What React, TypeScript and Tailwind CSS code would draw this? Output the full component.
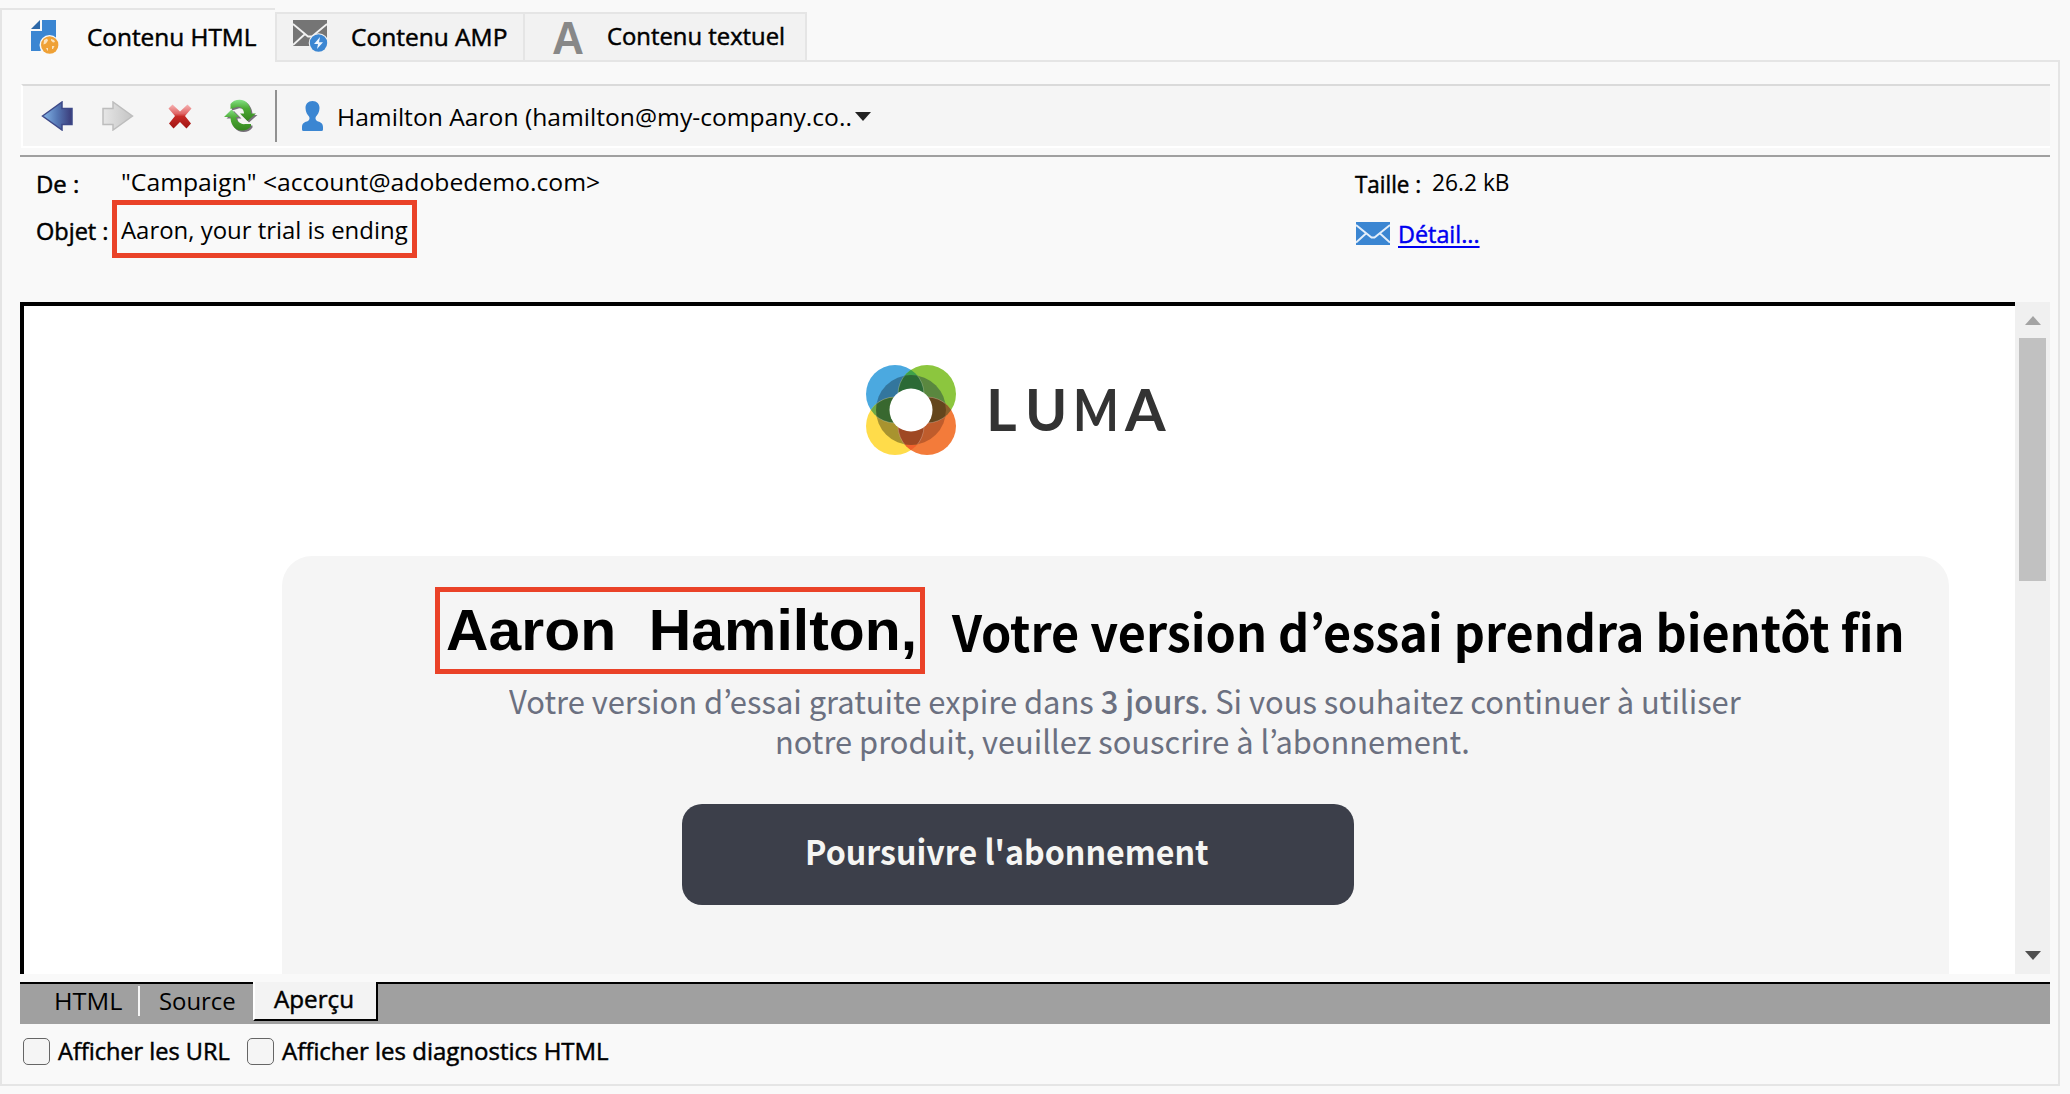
import { useLayoutEffect, useRef, useState, type ReactNode } from "react";

const UI = "font-['Open_Sans','Noto_Sans',sans-serif] text-[24.5px] leading-[32px]";
const CLEAN = "font-['Noto_Sans_CJK_KR','Noto_Sans_CJK_SC',sans-serif]";
const LABEL = "[-webkit-text-stroke:0.5px_currentColor]";

/* A single line of text condensed or stretched to fill a given width. */
function Fit({ w, className = "", children }: { w: number; className?: string; children: ReactNode }) {
  const ref = useRef<HTMLSpanElement>(null);
  const [scale, setScale] = useState(1);
  useLayoutEffect(() => {
    if (ref.current) setScale(w / ref.current.offsetWidth);
  }, [w]);
  return (
    <span className={`block shrink-0 ${className}`} style={{ width: w }}>
      <span ref={ref} className="inline-block origin-left whitespace-pre align-top" style={{ transform: `scaleX(${scale})` }}>
        {children}
      </span>
    </span>
  );
}

function PageIcon() {
  return (
    <svg width="28" height="34" viewBox="0 0 28 34" className="shrink-0">
      <path d="M11 0H25V20L9 31H0V11H11Z" fill="#3b86d2" />
      <path d="M0 9L9 0V9Z" fill="#2d68a8" />
      <circle cx="18.5" cy="25" r="10" fill="#f9f9f9" />
      <circle cx="18.7" cy="25" r="8.7" fill="#efa136" />
      <path d="M13 20l3-1.500 1 2-2 3-2.500 1zM20 19l3 1 1 2-2 .5-2-2zM15 28l2 0 0 3-1-1zM21 26l2.500 0-1.500 3-1 0z" fill="#fbe3bd" />
    </svg>
  );
}

function MailBoltIcon() {
  return (
    <svg width="35" height="33" viewBox="0 0 35 33" className="shrink-0">
      <path d="M0 0H34V26H0Z" fill="#757575" />
      <path d="M0 4L15 16.500H19L34 4M0 25L12 14M34 25L22 14" fill="none" stroke="#f2f2f2" strokeWidth="1.800" />
      <circle cx="25.500" cy="23" r="9.800" fill="#f2f2f2" />
      <circle cx="25.500" cy="23" r="8.700" fill="#3b86d2" />
      <path d="M27 17L21 24H25L24 29L30 22.300H26Z" fill="#eef6ff" />
    </svg>
  );
}

function BackIcon() {
  return (
    <svg width="32" height="30" viewBox="0 0 32 30" className="shrink-0">
      <defs>
        <linearGradient id="back" x1="0" x2="1">
          <stop offset="0" stopColor="#86b8ea" />
          <stop offset=".5" stopColor="#5577b4" />
          <stop offset="1" stopColor="#3a3a78" />
        </linearGradient>
      </defs>
      <path d="M1.500 15L21 1V7.500H31V23.500H21V29Z" fill="url(#back)" stroke="#3d4988" strokeWidth="1.500" />
    </svg>
  );
}

function ForwardIcon() {
  return (
    <svg width="32" height="30" viewBox="0 0 32 30" className="shrink-0">
      <defs>
        <linearGradient id="fwd" x1="0" x2="1">
          <stop offset="0" stopColor="#e6e6e6" />
          <stop offset="1" stopColor="#c4c4c4" />
        </linearGradient>
      </defs>
      <path d="M30.500 15L11 1V7.500H1V23.500H11V29Z" fill="url(#fwd)" stroke="#bdbdbd" strokeWidth="1.500" />
    </svg>
  );
}

function DeleteIcon() {
  return (
    <svg width="24" height="25" viewBox="0 0 24 25" className="shrink-0">
      <defs>
        <linearGradient id="del" x1="0" x2="0" y1="0" y2="1">
          <stop offset="0" stopColor="#f7b4b4" />
          <stop offset=".38" stopColor="#e06565" />
          <stop offset=".5" stopColor="#c62a26" />
          <stop offset="1" stopColor="#a01412" />
        </linearGradient>
      </defs>
      <path d="M4.500 0.500L12 7.500L19.500 0.500L23.500 4.500L17 12L23 19.500L18.500 24.500L12 18L5.500 24.500L1 19.500L7 12L0.500 4.500Z" fill="url(#del)" />
    </svg>
  );
}

function RefreshIcon() {
  return (
    <svg width="34" height="34" viewBox="0 0 34 34" className="shrink-0">
      <defs>
        <linearGradient id="ref" x1="0" x2="0" y1="0" y2="1">
          <stop offset="0" stopColor="#84e084" />
          <stop offset=".4" stopColor="#4cab35" />
          <stop offset="1" stopColor="#35851f" />
        </linearGradient>
      </defs>
      <g fill="#77707a" transform="translate(1.500 1.500)">
        <path d="M6.500 5C10 0 20-1 24 5C26 8 27 11 27 14.500H32L23.500 22L16 14.500H20C20 10 16 6 11.500 8.500L6.500 10Z" />
        <path d="M27 27C23 33 13 33 9 27C7 24 6.500 21 6.500 18H1L8.500 10.500L16 18H12C12 22 17 26 21.500 25H27Z" />
      </g>
      <g fill="url(#ref)">
        <path d="M6.500 5C10 0 20-1 24 5C26 8 27 11 27 14.500H32L23.500 22L16 14.500H20C20 10 16 6 11.500 8.500L6.500 10Z" />
        <path d="M27 27C23 33 13 33 9 27C7 24 6.500 21 6.500 18H0L7.500 10.500L15 18H12C12 22 17 26 21.500 25H27Z" />
      </g>
    </svg>
  );
}

function PersonIcon() {
  return (
    <svg width="21" height="30" viewBox="0 0 21 30" className="shrink-0">
      <path
        d="M10.500 0C15 0 17.500 3 17.500 7C17.500 11 15.500 14 14 15.500C13 17 13.500 19 15 20C18 21 21 22 21 26V28.500Q21 30 19.500 30H1.500Q0 30 0 28.500V26C0 22 3 21 6 20C7.500 19 8 17 7 15.500C5.500 14 3.500 11 3.500 7C3.500 3 6 0 10.500 0Z"
        fill="#3b86d2"
      />
    </svg>
  );
}

function EnvelopeIcon() {
  return (
    <svg width="34" height="23" viewBox="0 0 34 23" className="shrink-0">
      <path d="M0 0H34V23H0Z" fill="#3b86d2" />
      <path d="M0 3L15.500 15.500H18.500L34 3M0 20.500L10.500 11M34 20.500L23.500 11" fill="none" stroke="#e3eefa" strokeWidth="2" />
    </svg>
  );
}

function LumaLogo() {
  return (
    <svg width="90" height="90" viewBox="0 0 90 90" className="shrink-0">
      <defs>
        <clipPath id="cb"><circle cx="29" cy="29" r="29" /></clipPath>
        <clipPath id="cg"><circle cx="61" cy="29" r="29" /></clipPath>
        <clipPath id="cy"><circle cx="29" cy="61" r="29" /></clipPath>
        <clipPath id="co"><circle cx="61" cy="61" r="29" /></clipPath>
        <clipPath id="ring"><circle cx="45" cy="45" r="35" /></clipPath>
      </defs>
      <circle cx="29" cy="29" r="29" fill="#4ba9e0" />
      <circle cx="61" cy="29" r="29" fill="#8cc63e" />
      <circle cx="29" cy="61" r="29" fill="#ffdc4a" />
      <circle cx="61" cy="61" r="29" fill="#f37b3a" />
      <g clipPath="url(#cb)"><circle cx="61" cy="29" r="29" fill="#3fa14a" /></g>
      <g clipPath="url(#cb)"><circle cx="29" cy="61" r="29" fill="#6ea845" /></g>
      <g clipPath="url(#cg)"><circle cx="61" cy="61" r="29" fill="#8a5f2a" /></g>
      <g clipPath="url(#cy)"><circle cx="61" cy="61" r="29" fill="#f0602c" /></g>
      <g clipPath="url(#ring)">
        <circle cx="29" cy="29" r="29" fill="#33769d" />
        <circle cx="61" cy="29" r="29" fill="#5a873f" />
        <circle cx="29" cy="61" r="29" fill="#a8932f" />
        <circle cx="61" cy="61" r="29" fill="#bf5c2c" />
        <g clipPath="url(#cb)"><circle cx="61" cy="29" r="29" fill="#2b6a35" /></g>
        <g clipPath="url(#cb)"><circle cx="29" cy="61" r="29" fill="#38682f" /></g>
        <g clipPath="url(#cg)"><circle cx="61" cy="61" r="29" fill="#64461d" /></g>
        <g clipPath="url(#cy)"><circle cx="61" cy="61" r="29" fill="#9f4823" /></g>
        <g fill="none" stroke="#ffffff" strokeOpacity=".3" strokeWidth=".8">
          <circle cx="29" cy="29" r="29" />
          <circle cx="61" cy="29" r="29" />
          <circle cx="29" cy="61" r="29" />
          <circle cx="61" cy="61" r="29" />
        </g>
      </g>
      <circle cx="45" cy="45" r="21.500" fill="#fff" />
    </svg>
  );
}

function Checkbox() {
  return <span className="h-[27px] w-[27px] shrink-0 rounded-[5px] border-[1.5px] border-[#666] bg-[#f5f5f5]" />;
}

export default function App() {
  return (
    <div className={`flex h-[1094px] w-[2070px] flex-col overflow-hidden bg-[#f9f9f9] text-black ${UI}`}>
      {/* Content tabs */}
      <div className="mt-[8px] flex h-[54px] shrink-0 items-end">
        <div className="flex h-[54px] w-[275px] shrink-0 border-t-2 border-l-2 border-[#e5e5e5] pt-[10px] pl-[29px]">
          <PageIcon />
          <Fit w={169} className={`mt-[1px] ml-[28px] ${LABEL}`}>Contenu HTML</Fit>
        </div>
        <div className="flex h-[50px] w-[248px] shrink-0 border-2 border-r-0 border-[#e5e5e5] bg-[#f2f2f2] pt-[6px] pl-[16px]">
          <MailBoltIcon />
          <Fit w={156} className={`mt-[1px] ml-[23px] ${LABEL}`}>Contenu AMP</Fit>
        </div>
        <div className="flex h-[50px] w-[284px] shrink-0 border-2 border-[#e5e5e5] bg-[#f2f2f2] pt-[6px] pl-[27px]">
          <Fit w={32} className="mt-[1px] font-['Liberation_Sans',sans-serif] text-[47px] leading-[34px] font-bold text-[#888]">A</Fit>
          <Fit w={178} className={`ml-[23px] ${LABEL}`}>Contenu textuel</Fit>
        </div>
        <div className="h-[2px] w-[1253px] bg-[#e5e5e5]" />
      </div>

      {/* Panel */}
      <div className="flex h-[1024px] w-[2060px] shrink-0 flex-col border-r-2 border-b-2 border-l-2 border-[#e5e5e5] pr-[8px] pl-[18px]">
        {/* Toolbar */}
        <div className="mt-[22px] ml-[1px] flex h-[64px] shrink-0 items-center border-t-2 border-b-2 border-l-2 border-t-[#dadada] border-b-white border-l-white bg-[#f5f5f5] pl-[18px]">
          <BackIcon />
          <span className="ml-[29px]"><ForwardIcon /></span>
          <span className="ml-[34px]"><DeleteIcon /></span>
          <span className="ml-[32px]"><RefreshIcon /></span>
          <span className="ml-[17px] h-[52px] w-[2px] bg-[#919191]" />
          <span className="ml-[25px]"><PersonIcon /></span>
          <Fit w={515} className="mt-[2px] ml-[14px]">Hamilton Aaron (hamilton@my-company.co..</Fit>
          <svg width="16" height="9" viewBox="0 0 16 9" className="mt-[1px] ml-[3px]"><path d="M0 0H16L8 9Z" fill="#222" /></svg>
        </div>
        <div className="mt-[7px] h-[2px] shrink-0 bg-[#a0a0a0]" />

        {/* Message headers */}
        <div className="flex h-[145px] shrink-0">
          <div className="w-[1335px] shrink-0 pt-[9px] pl-[16px]">
            <div className="flex h-[34px]">
              <Fit w={43} className={`mt-[2px] ${LABEL}`}>De :</Fit>
              <Fit w={479} className="ml-[42px]">"Campaign" &lt;account@adobedemo.com&gt;</Fit>
            </div>
            <div className="flex h-[60px]">
              <Fit w={73} className={`mt-[15px] ${LABEL}`}>Objet :</Fit>
              <div className="ml-[3px] h-[58px] w-[305px] shrink-0 border-[5px] border-[#ea4228] pt-[9px] pl-[4px]">
                <Fit w={287}>Aaron, your trial is ending</Fit>
              </div>
            </div>
          </div>
          <div className="pt-[9px]">
            <div className="flex">
              <Fit w={66} className={`mt-[2px] ${LABEL}`}>Taille :</Fit>
              <Fit w={78} className="ml-[11px]">26.2 kB</Fit>
            </div>
            <div className="mt-[18px] flex">
              <span className="mt-[4px] ml-[1px]"><EnvelopeIcon /></span>
              <Fit w={82} className={`ml-[8px] text-[#0000f0] ${LABEL}`}><span className="underline decoration-2 underline-offset-[3px]">Détail...</span></Fit>
            </div>
          </div>
        </div>

        {/* Preview */}
        <div className="flex h-[672px] shrink-0">
          <div className="flex w-[1995px] shrink-0 flex-col border-t-4 border-l-4 border-black bg-white">
            <div className="mt-[59px] ml-[842px] flex h-[90px] shrink-0 items-center">
              <LumaLogo />
              <div className="-mt-[3px] ml-[30px] flex font-['Lato',sans-serif] text-[57px] leading-[60px] font-bold text-[#333]">
                <Fit w={31}>L</Fit>
                <Fit w={42} className="ml-[8px]">U</Fit>
                <Fit w={46} className="ml-[6px]">M</Fit>
                <Fit w={41} className="ml-[6px]">A</Fit>
              </div>
            </div>
            <div className="mt-[101px] ml-[258px] flex w-[1667px] grow flex-col rounded-t-[30px] bg-[#f5f5f5] pt-[31px]">
              <div className="flex h-[87px] shrink-0 pl-[153px]">
                <div className="w-[490px] shrink-0 border-[5px] border-[#ea4228] pt-[5px] pl-[6px]">
                  <Fit w={471} className="font-['Liberation_Sans',Arial,sans-serif] text-[58px] leading-[66px] font-bold">Aaron  Hamilton,</Fit>
                </div>
                <Fit w={953} className={`ml-[27px] pt-[13px] text-[50px] leading-[60px] font-bold ${CLEAN}`}>Votre version d’essai prendra bientôt fin</Fit>
              </div>
              <div className={`mt-[6px] text-[32px] leading-[40px] text-[#6b7080] ${CLEAN}`}>
                <Fit w={1232} className="ml-[227px]">
                  Votre version d’essai gratuite expire dans <b className="font-medium">3 jours</b>. Si vous souhaitez continuer à utiliser
                </Fit>
                <Fit w={695} className="ml-[493px]">notre produit, veuillez souscrire à l’abonnement.</Fit>
              </div>
              <div className={`mt-[44px] ml-[400px] h-[101px] w-[672px] rounded-[20px] bg-[#3c3f4a] pt-[27px] pl-[123px] text-[34px] leading-[40px] font-bold text-[#f5f5f3] ${CLEAN}`}>
                <Fit w={404}>Poursuivre l'abonnement</Fit>
              </div>
            </div>
          </div>
          <div className="flex w-[35px] shrink-0 flex-col items-center bg-[#f0f0f0]">
            <svg width="16" height="9" viewBox="0 0 16 9" className="mt-[14px] shrink-0"><path d="M0 9H16L8 0Z" fill="#a3a3a3" /></svg>
            <div className="mt-[13px] h-[243px] w-[27px] shrink-0 bg-[#c1c1c1]" />
            <svg width="16" height="9" viewBox="0 0 16 9" className="mt-auto mb-[14px] shrink-0"><path d="M0 0H16L8 9Z" fill="#505050" /></svg>
          </div>
        </div>

        {/* View tabs */}
        <div className="mt-[8px] flex h-[42px] shrink-0 border-t-2 border-black bg-[#a0a0a0]">
          <Fit w={68} className="mt-[1px] ml-[34px]">HTML</Fit>
          <span className="mt-[2px] ml-[16px] h-[30px] w-[2px] bg-[#f5f5f5]" />
          <Fit w={77} className="mt-[1px] ml-[19px]">Source</Fit>
          <div className="-mt-[2px] ml-[17px] h-[39px] w-[125px] border-r-2 border-b-2 border-l-2 border-black border-l-white bg-[#f3f3f3] pl-[19px]">
            <Fit w={80} className={`mt-[1px] ${LABEL}`}>Aperçu</Fit>
          </div>
        </div>

        {/* Options */}
        <div className="mt-[10px] flex h-[34px] shrink-0 items-center pl-[3px]">
          <Checkbox />
          <Fit w={172} className={`ml-[8px] ${LABEL}`}>Afficher les URL</Fit>
          <span className="ml-[17px] flex"><Checkbox /></span>
          <Fit w={327} className={`ml-[8px] ${LABEL}`}>Afficher les diagnostics HTML</Fit>
        </div>
      </div>
    </div>
  );
}
